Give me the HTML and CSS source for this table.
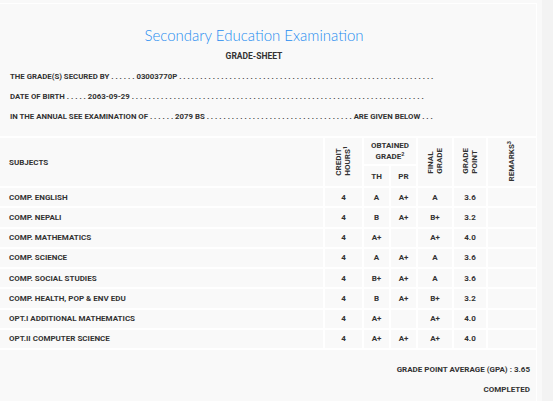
FILE: index.html
```html
<!DOCTYPE html>
<html>
<head>
<meta charset="utf-8">
<link rel="stylesheet" href="styles.css">
</head>
<body>
<div class="page">
  <div class="card">
    <header class="head">
      <h1 class="title">Secondary Education Examination</h1>
      <h2 class="subtitle">GRADE-SHEET</h2>
    </header>
    <div class="info">
      <p class="line">THE GRADE(S) SECURED BY . . . . . . 03003770P . . . . . . . . . . . . . . . . . . . . . . . . . . . . . . . . . . . . . . . . . . . . . . . . . . . . . . . . . . . . .</p>
      <p class="line">DATE OF BIRTH . . . . . 2063-09-29 . . . . . . . . . . . . . . . . . . . . . . . . . . . . . . . . . . . . . . . . . . . . . . . . . . . . . . . . . . . . . . . . . . . . . .</p>
      <p class="line">IN THE ANNUAL SEE EXAMINATION OF . . . . . . 2079 BS . . . . . . . . . . . . . . . . . . . . . . . . . . . . . . . . . . . ARE GIVEN BELOW . . .</p>
    </div>
    <table class="grades">
      <colgroup>
        <col class="c-sub"><col class="c-cr"><col class="c-th"><col class="c-pr"><col class="c-fg"><col class="c-gp"><col class="c-rm">
      </colgroup>
      <thead>
        <tr class="h1">
          <th rowspan="2" class="sub">SUBJECTS</th>
          <th rowspan="2"><span class="vert">CREDIT<br>HOURS<sup>1</sup></span></th>
          <th colspan="2" class="og">OBTAINED<br>GRADE<sup>2</sup></th>
          <th rowspan="2"><span class="vert">FINAL<br>GRADE</span></th>
          <th rowspan="2"><span class="vert">GRADE<br>POINT</span></th>
          <th rowspan="2"><span class="vert">REMARKS<sup>3</sup></span></th>
        </tr>
        <tr class="h2">
          <th>TH</th>
          <th>PR</th>
        </tr>
      </thead>
      <tbody>
        <tr><td class="sub">COMP. ENGLISH</td><td>4</td><td>A</td><td>A+</td><td>A</td><td>3.6</td><td></td></tr>
        <tr><td class="sub">COMP. NEPALI</td><td>4</td><td>B</td><td>A+</td><td>B+</td><td>3.2</td><td></td></tr>
        <tr><td class="sub">COMP. MATHEMATICS</td><td>4</td><td>A+</td><td></td><td>A+</td><td>4.0</td><td></td></tr>
        <tr><td class="sub">COMP. SCIENCE</td><td>4</td><td>A</td><td>A+</td><td>A</td><td>3.6</td><td></td></tr>
        <tr><td class="sub">COMP. SOCIAL STUDIES</td><td>4</td><td>B+</td><td>A+</td><td>A</td><td>3.6</td><td></td></tr>
        <tr><td class="sub">COMP. HEALTH, POP &amp; ENV EDU</td><td>4</td><td>B</td><td>A+</td><td>B+</td><td>3.2</td><td></td></tr>
        <tr><td class="sub">OPT.I ADDITIONAL MATHEMATICS</td><td>4</td><td>A+</td><td></td><td>A+</td><td>4.0</td><td></td></tr>
        <tr><td class="sub">OPT.II COMPUTER SCIENCE</td><td>4</td><td>A+</td><td>A+</td><td>A+</td><td>4.0</td><td></td></tr>
      </tbody>
    </table>
    <div class="foot">
      <p class="gpa">GRADE POINT AVERAGE (GPA) : 3.65</p>
      <p class="status">COMPLETED</p>
    </div>
  </div>
</div>
</body>
</html>
```

FILE: styles.css
```css
html, body {
  margin: 0;
  padding: 0;
}
body {
  background: #f3f3f3;
  font-family: "Roboto", "Liberation Sans", sans-serif;
  color: #333;
}
.page {
  width: 542px;
  height: 401px;
  background: #f9f9f9;
  padding-top: 3px;
  box-sizing: border-box;
}
.card {
  width: 537px;
  height: 398px;
  border-top: 1px solid #fff;
  border-right: 1px solid #fff;
  box-sizing: border-box;
}
.head {
  width: 508px;
  text-align: center;
  padding-top: 21px;
}
.title {
  margin: 0;
  font-family: "Lato", sans-serif;
  font-weight: 300;
  font-size: 15px;
  line-height: 20px;
  color: #1e8cf0;
}
.subtitle {
  margin: 6px 0 0;
  font-size: 8.5px;
  line-height: 10px;
  font-weight: bold;
  color: #333;
}
.info {
  padding: 6px 0 0 10px;
}
.line {
  margin: 0;
  font-size: 7.8px;
  line-height: 20px;
  font-weight: bold;
  white-space: nowrap;
}
.grades {
  margin-top: 9px;
  width: 537px;
  border-collapse: collapse;
  table-layout: fixed;
  font-size: 8px;
  font-weight: bold;
}
.c-sub { width: 324px; }
.c-cr { width: 39px; }
.c-th { width: 27px; }
.c-pr { width: 27px; }
.c-fg { width: 36px; }
.c-gp { width: 34px; }
.c-rm { width: 50px; }
.grades th, .grades td {
  border: 2px solid #fff;
  padding: 0;
  text-align: center;
  vertical-align: middle;
  font-weight: bold;
}
.grades th:first-child, .grades td:first-child { border-left: 0; }
.grades th:last-child, .grades td:last-child { border-right: 0; }
.grades .sub {
  text-align: left;
  padding-left: 9px;
}
.h1 { height: 28px; }
.h2 { height: 22px; }
.grades tbody tr { height: 20.25px; }
.og {
  line-height: 11px;
  padding-top: 2px;
}
.vert {
  display: inline-block;
  writing-mode: vertical-rl;
  transform: rotate(180deg);
  line-height: 8.5px;
  text-align: left;
}
sup {
  font-size: 5.5px;
  line-height: 0;
  vertical-align: 3px;
}
.foot {
  padding-right: 6px;
  text-align: right;
}
.gpa, .status {
  margin: 0;
  font-size: 8px;
  font-weight: bold;
  line-height: 20px;
}
.gpa { margin-top: 10px; }
```
